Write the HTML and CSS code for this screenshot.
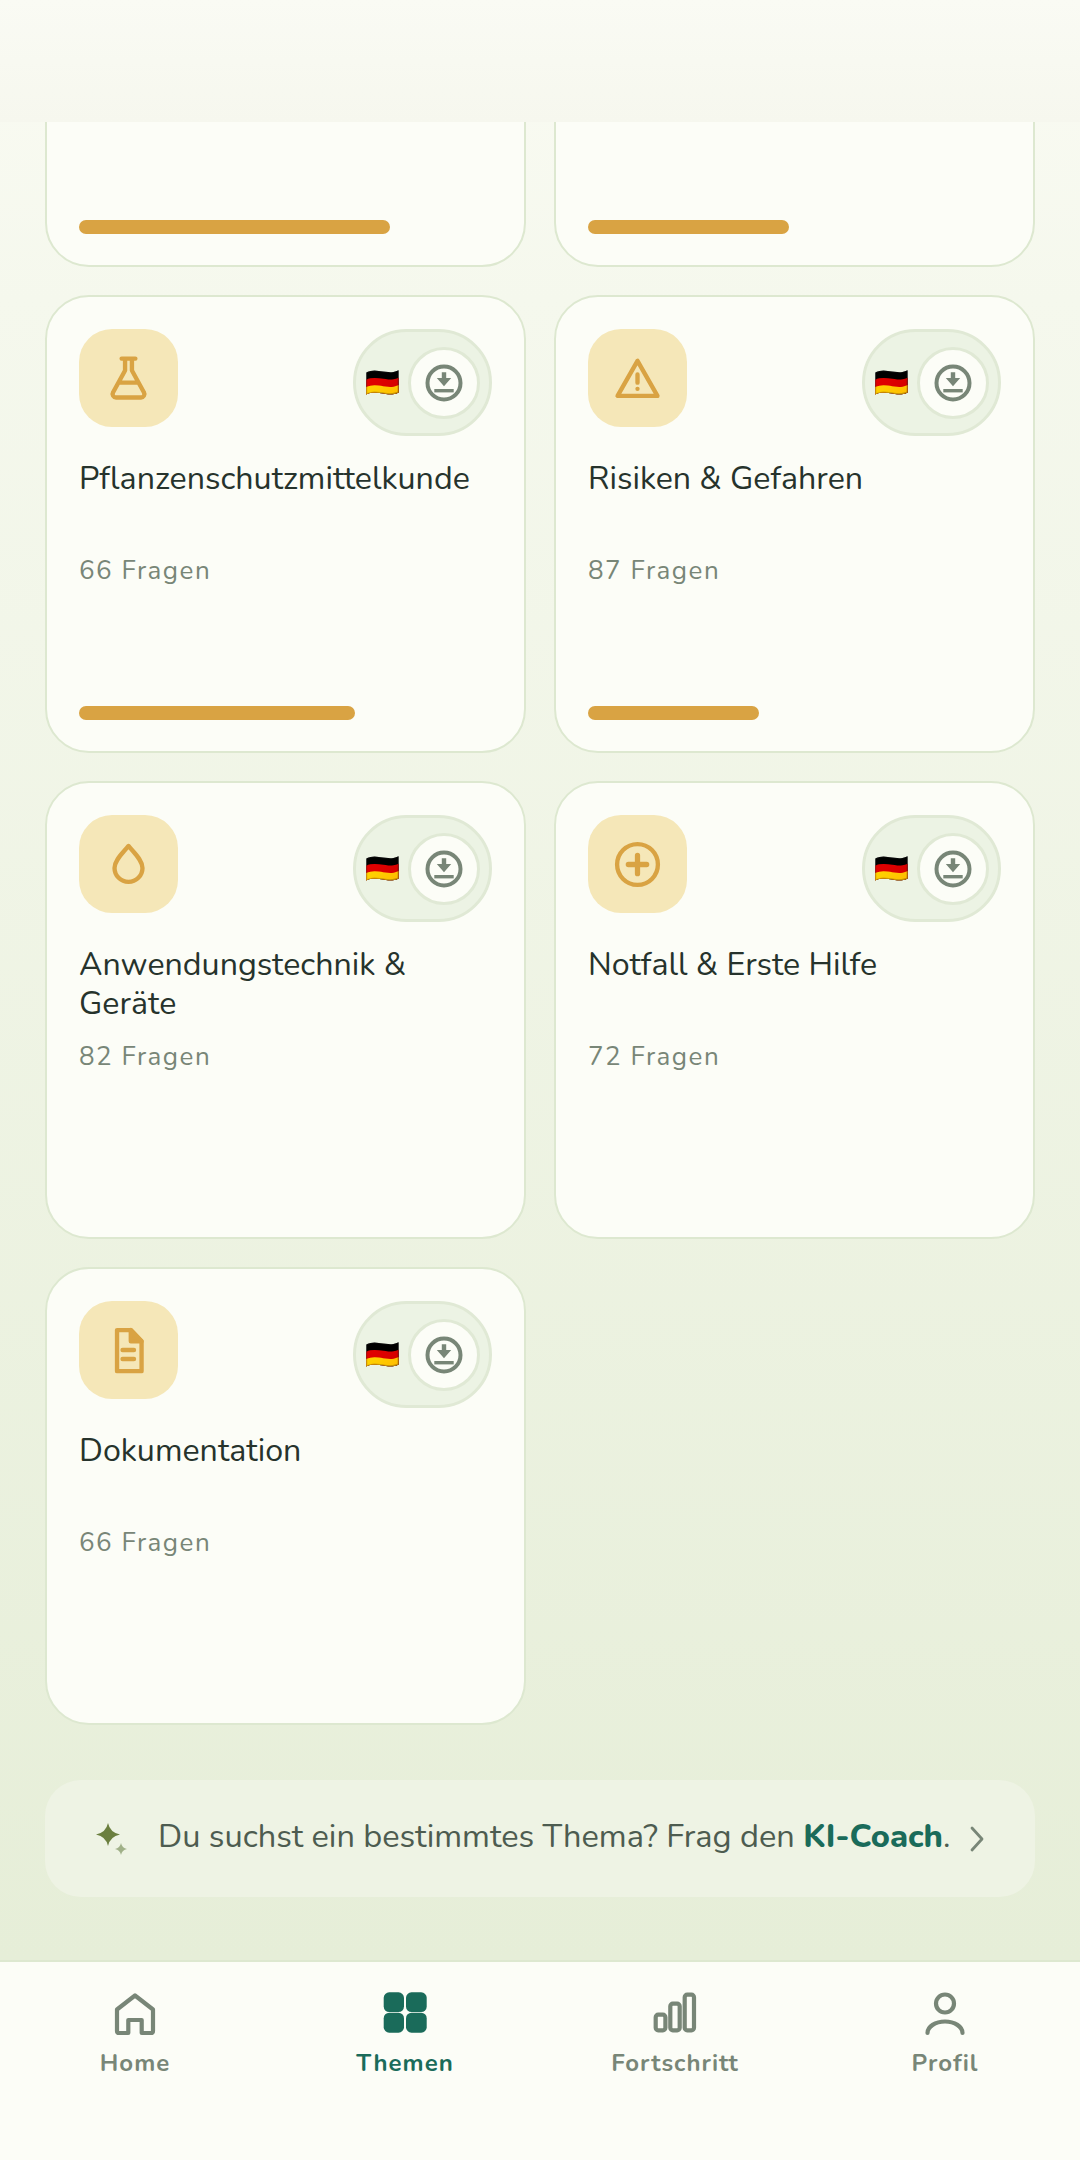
FILE: index.html
```html
<!DOCTYPE html>
<html lang="de">
<head>
<meta charset="utf-8">
<title>Themen</title>
<link rel="stylesheet" href="styles.css">
</head>
<body>
<svg class="defs" width="0" height="0" aria-hidden="true">
  <symbol id="dl" viewBox="0 0 40 40">
    <circle cx="20" cy="20" r="16.500" fill="none" stroke="currentColor" stroke-width="4"/>
    <path d="M17.800 9.300h4.400V15h5L20 23.300 12.800 15h5z" fill="currentColor"/>
    <rect x="10.300" y="26" width="19.400" height="3.400" fill="currentColor"/>
  </symbol>
</svg>
<div class="screen">
  <header class="topbar"></header>
  <main class="scroll">
    <div class="grid">
      <article class="card"><div class="bar" style="width:311px"></div></article>
      <article class="card"><div class="bar" style="width:201px"></div></article>

      <article class="card">
        <div class="card-head">
          <div class="icon-box"><svg class="ti" viewBox="0 0 24 24"><path d="M9 3.300h6M10.500 3.300V8.500L5.300 18a1.500 1.500 0 0 0 1.300 2.300h10.800a1.500 1.500 0 0 0 1.300-2.300L13.500 8.500V3.300M8 13.800h8"/></svg></div>
          <div class="pill"><span class="flag">🇩🇪</span><span class="dl-btn"><svg class="dl"><use href="#dl"/></svg></span></div>
        </div>
        <h3 class="title">Pflanzenschutzmittelkunde</h3>
        <p class="count">66 Fragen</p>
        <div class="bar" style="width:276px"></div>
      </article>

      <article class="card">
        <div class="card-head">
          <div class="icon-box"><svg class="ti" viewBox="0 0 24 24"><path d="M12 4.300 3.300 19.600H20.700zM12 10.200v3.600M12 16.500v.01"/></svg></div>
          <div class="pill"><span class="flag">🇩🇪</span><span class="dl-btn"><svg class="dl"><use href="#dl"/></svg></span></div>
        </div>
        <h3 class="title">Risiken &amp; Gefahren</h3>
        <p class="count">87 Fragen</p>
        <div class="bar" style="width:171px"></div>
      </article>

      <article class="card">
        <div class="card-head">
          <div class="icon-box"><svg class="ti" viewBox="0 0 24 24"><path d="M12 3.900C9.500 7 5.900 10 5.900 13.500a6.100 6.100 0 0 0 12.200 0C18.100 10 14.500 7 12 3.900z"/></svg></div>
          <div class="pill"><span class="flag">🇩🇪</span><span class="dl-btn"><svg class="dl"><use href="#dl"/></svg></span></div>
        </div>
        <h3 class="title">Anwendungstechnik &amp; Geräte</h3>
        <p class="count">82 Fragen</p>
      </article>

      <article class="card">
        <div class="card-head">
          <div class="icon-box"><svg class="ti" viewBox="0 0 24 24"><circle cx="12" cy="12" r="8.900"/><path class="ti-thick" d="M12 8v8M8 12h8"/></svg></div>
          <div class="pill"><span class="flag">🇩🇪</span><span class="dl-btn"><svg class="dl"><use href="#dl"/></svg></span></div>
        </div>
        <h3 class="title">Notfall &amp; Erste Hilfe</h3>
        <p class="count">72 Fragen</p>
      </article>

      <article class="card">
        <div class="card-head">
          <div class="icon-box"><svg class="ti" viewBox="0 0 24 24"><path d="M7 3.100H13L17.700 8V21H7z"/><path class="ti-fill" d="M13 3.100V8H17.700z"/><path d="M9.400 11.800h5M9.400 15.700h5"/></svg></div>
          <div class="pill"><span class="flag">🇩🇪</span><span class="dl-btn"><svg class="dl"><use href="#dl"/></svg></span></div>
        </div>
        <h3 class="title">Dokumentation</h3>
        <p class="count">66 Fragen</p>
      </article>
    </div>

    <a class="coach">
      <svg class="sparks" viewBox="0 0 32 32">
        <path class="spark-a" d="M12 0Q14 9.500 24 11.500 14 13.500 12 23 10 13.500 0 11.500 10 9.500 12 0z"/>
        <path class="spark-b" d="M25 20Q26 25 31 26 26 27 25 32 24 27 19 26 24 25 25 20z"/>
      </svg>
      <span class="coach-text">Du suchst ein bestimmtes Thema? Frag den <b>KI-Coach</b>.</span>
      <svg class="chev" viewBox="0 0 16 26"><path d="M3 2l10 11L3 24"/></svg>
    </a>
  </main>

  <nav class="nav">
    <div class="nav-item">
      <svg class="nav-icon" viewBox="0 0 48 48"><path d="M24 5.500 6 19.500V41a2 2 0 0 0 2 2H17.300V30H30.700V43H40a2 2 0 0 0 2-2V19.500z"/></svg>
      <span>Home</span>
    </div>
    <div class="nav-item active">
      <svg class="nav-icon solid" viewBox="0 0 48 48"><rect x="2.700" y="2.300" width="20.300" height="19.700" rx="5.500"/><rect x="25" y="2.300" width="20.700" height="19.700" rx="5.500"/><rect x="2.700" y="22.700" width="20.300" height="20" rx="5.500"/><rect x="25" y="22.700" width="20.700" height="20" rx="5.500"/></svg>
      <span>Themen</span>
    </div>
    <div class="nav-item">
      <svg class="nav-icon" viewBox="0 0 48 48"><rect x="4.700" y="24.700" width="9.700" height="15.600" rx="2.500"/><rect x="19.300" y="13.700" width="9.400" height="26.600" rx="2.500"/><rect x="33.700" y="4.700" width="9.300" height="35.600" rx="2.500"/></svg>
      <span>Fortschritt</span>
    </div>
    <div class="nav-item">
      <svg class="nav-icon" viewBox="0 0 48 48"><circle cx="24" cy="13.500" r="9"/><path d="M6.500 43a17.500 11.500 0 0 1 35 0"/></svg>
      <span>Profil</span>
    </div>
  </nav>
</div>
</body>
</html>
```
FILE: styles.css
```css
* { box-sizing: border-box; }
html, body { margin: 0; padding: 0; }
body { font-family: "Nunito", "Lato", "Noto Sans", sans-serif; color: #26332c; }
.defs { position: absolute; }

.screen {
  width: 1080px;
  height: 2160px;
  display: flex;
  flex-direction: column;
  overflow: hidden;
  background: linear-gradient(180deg, #fafbf3 0, #f5f8ed 300px, #e6eed8 1960px);
}
.topbar {
  flex: 0 0 122px;
  background: linear-gradient(180deg, #fafbf4, #f6f7ee);
  position: relative;
  z-index: 2;
}
.scroll {
  flex: 1;
  min-height: 0;
  overflow: hidden;
  padding: 0 45px;
}
.grid {
  margin-top: -313px;
  display: grid;
  grid-template-columns: 481px 481px;
  grid-auto-rows: 458px;
  gap: 28px;
}
.card {
  display: flex;
  flex-direction: column;
  padding: 32px 32px 31px;
  background: #fcfdf7;
  border: 2px solid #dde8d0;
  border-radius: 44px;
}
.card-head {
  display: flex;
  justify-content: space-between;
  align-items: flex-start;
  height: 107px;
}
.icon-box {
  width: 99px;
  height: 98px;
  border-radius: 33px;
  background: #f5e7b8;
  display: flex;
  align-items: center;
  justify-content: center;
}
.ti {
  width: 55px;
  height: 55px;
  fill: none;
  stroke: #d9a343;
  stroke-width: 1.900;
  stroke-linecap: round;
  stroke-linejoin: round;
}
.ti-thick { stroke-width: 2.300; }
.ti-fill { fill: #d9a343; }
.pill {
  width: 139px;
  height: 107px;
  border: 3px solid #e0e9d5;
  border-radius: 54px;
  background: #ecf3e4;
  display: flex;
  align-items: center;
  justify-content: space-between;
  padding: 0 9px;
}
.flag {
  font-family: "Noto Color Emoji", sans-serif;
  font-size: 28px;
  line-height: 1;
}
.dl-btn {
  width: 72px;
  height: 72px;
  border: 3px solid #e0e9d5;
  border-radius: 50%;
  background: #fcfdf7;
  display: flex;
  align-items: center;
  justify-content: center;
  color: #788677;
}
.dl { width: 40px; height: 40px; flex: none; }
.title {
  margin: 23px 0 0;
  height: 78px;
  font-size: 32.200px;
  line-height: 39px;
  font-weight: 400;
  color: #26332c;
}
.count {
  margin: 17px 0 0;
  font-size: 26px;
  line-height: 34px;
  letter-spacing: 1.500px;
  color: #788677;
}
.bar {
  margin-top: auto;
  height: 14px;
  border-radius: 7px;
  background: #d9a343;
}

.coach {
  margin-top: 55px;
  height: 117px;
  display: flex;
  align-items: center;
  padding: 0 50px 0 51px;
  background: #eef3e4;
  border-radius: 36px;
}
.sparks { width: 32px; height: 32px; flex: none; }
.spark-a { fill: #6b7f3f; }
.spark-b { fill: #a0b088; }
.coach-text {
  margin: 0 0 5px 30px;
  flex: 1;
  font-size: 32.550px;
  line-height: 40px;
  color: #4d5c50;
}
.coach-text b { color: #1a6b5a; font-weight: 800; }
.chev {
  width: 16px;
  height: 26px;
  flex: none;
  fill: none;
  stroke: #788677;
  stroke-width: 2.800;
  stroke-linecap: round;
  stroke-linejoin: round;
}

.nav {
  flex: 0 0 200px;
  display: grid;
  grid-template-columns: repeat(4, 1fr);
  background: #fcfdf7;
  border-top: 2px solid #dde8d0;
  padding-top: 28px;
  position: relative;
  z-index: 2;
}
.nav-item {
  display: flex;
  flex-direction: column;
  align-items: center;
  font-size: 24px;
  line-height: 32px;
  font-weight: 700;
  letter-spacing: 1px;
  color: #788677;
}
.nav-icon {
  width: 48px;
  height: 48px;
  margin-bottom: 9px;
  fill: none;
  stroke: #788677;
  stroke-width: 4.200;
  stroke-linecap: round;
  stroke-linejoin: round;
}
.nav-icon.solid { fill: #1a6b5a; stroke: none; }
.nav-item.active { color: #1a6b5a; }
```
